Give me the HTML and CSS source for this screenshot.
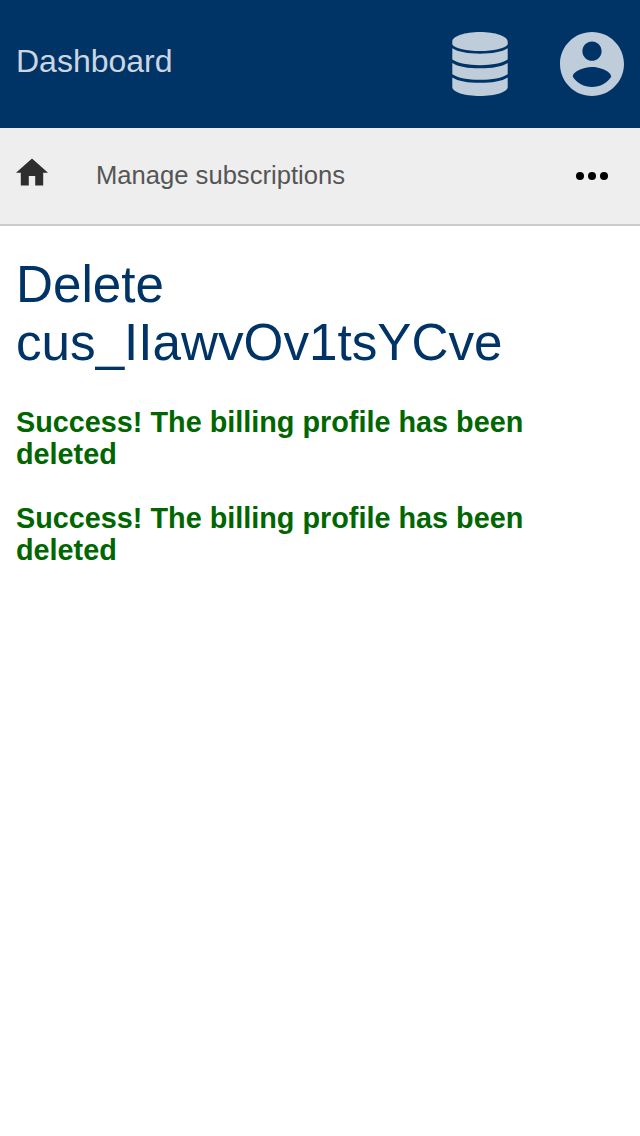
FILE: index.html
```html
<!DOCTYPE html>
<html lang="en">
<head>
<meta charset="utf-8">
<title>Dashboard</title>
<link rel="stylesheet" href="styles.css">
</head>
<body>
<header class="topbar">
  <a class="brand">Dashboard</a>
  <nav class="menus">
    <svg class="icon" viewBox="0 0 64 64"><path d="M4.300 9.500C4.300 4.200 16.700 0 32 0S59.700 4.200 59.700 9.500V12.500C57 16.500 45.500 19 32 19S7 16.500 4.300 12.500ZM4.300 16.300C10 20 20 21.700 32 21.700S54 20 59.700 16.300V27.600C54 31.300 44 33.200 32 33.200S10 31.300 4.300 27.600ZM4.300 30.900C10 34.600 20 36.300 32 36.300S54 34.600 59.700 30.900V42.200C54 45.900 44 47.800 32 47.800S10 45.900 4.300 42.200ZM4.300 45.400C10 49.100 20 50.800 32 50.800S54 49.100 59.700 45.400V55C59.700 60 47.300 64 32 64S4.300 60 4.300 55Z"/></svg>
    <svg class="icon" viewBox="2 2 20 20"><path d="M12 2C6.480 2 2 6.480 2 12s4.480 10 10 10 10-4.480 10-10S17.520 2 12 2zm0 3c1.660 0 3 1.340 3 3s-1.340 3-3 3-3-1.340-3-3 1.340-3 3-3zm0 14.200c-2.500 0-4.710-1.280-6-3.220.03-1.990 4-3.080 6-3.080 1.990 0 5.970 1.090 6 3.080-1.290 1.940-3.500 3.220-6 3.220z"/></svg>
  </nav>
</header>
<nav class="navbar">
  <svg class="home" viewBox="2 1.500 20 20"><path d="M10 20v-6h4v6h5v-8h3L12 3 2 12h3v8z"/></svg>
  <a class="section">Manage subscriptions</a>
  <svg class="more" viewBox="0 0 32 8"><circle cx="4" cy="4" r="4"/><circle cx="16" cy="4" r="4"/><circle cx="28" cy="4" r="4"/></svg>
</nav>
<main class="content">
  <h1 class="title">Delete cus_IIawvOv1tsYCve</h1>
  <div class="success">Success! The billing profile has been deleted</div>
  <div class="success">Success! The billing profile has been deleted</div>
</main>
</body>
</html>
```

FILE: styles.css
```css
body {
  margin: 0;
  background: #fff;
  font-family: "Liberation Sans", Arial, sans-serif;
}
.topbar {
  display: flex;
  align-items: center;
  justify-content: space-between;
  box-sizing: border-box;
  height: 128px;
  padding: 0 16px;
  background: #036;
}
.brand {
  padding-bottom: 6px;
  color: #ccd6e0;
  font-size: 32px;
}
.menus {
  display: flex;
  gap: 48px;
}
.icon {
  width: 64px;
  height: 64px;
  fill: #bfccd9;
}
.navbar {
  display: flex;
  align-items: center;
  box-sizing: border-box;
  height: 98px;
  padding: 0 32px 0 16px;
  border-bottom: 2px solid #ccc;
  background: #eee;
}
.home {
  width: 32px;
  height: 32px;
  margin-bottom: 8px;
  fill: #2e2e2e;
}
.section {
  margin-left: 48px;
  padding-bottom: 2px;
  color: #555;
  font-size: 25.6px;
}
.more {
  width: 32px;
  height: 8px;
  margin-left: auto;
}
.content {
  padding: 30px 16px;
}
.title {
  margin: 0 0 34px;
  color: #036;
  font-size: 51.2px;
  font-weight: 400;
  line-height: 58px;
}
.success {
  margin-bottom: 32px;
  color: #060;
  font-size: 28.8px;
  font-weight: 700;
  line-height: 32px;
}
```
